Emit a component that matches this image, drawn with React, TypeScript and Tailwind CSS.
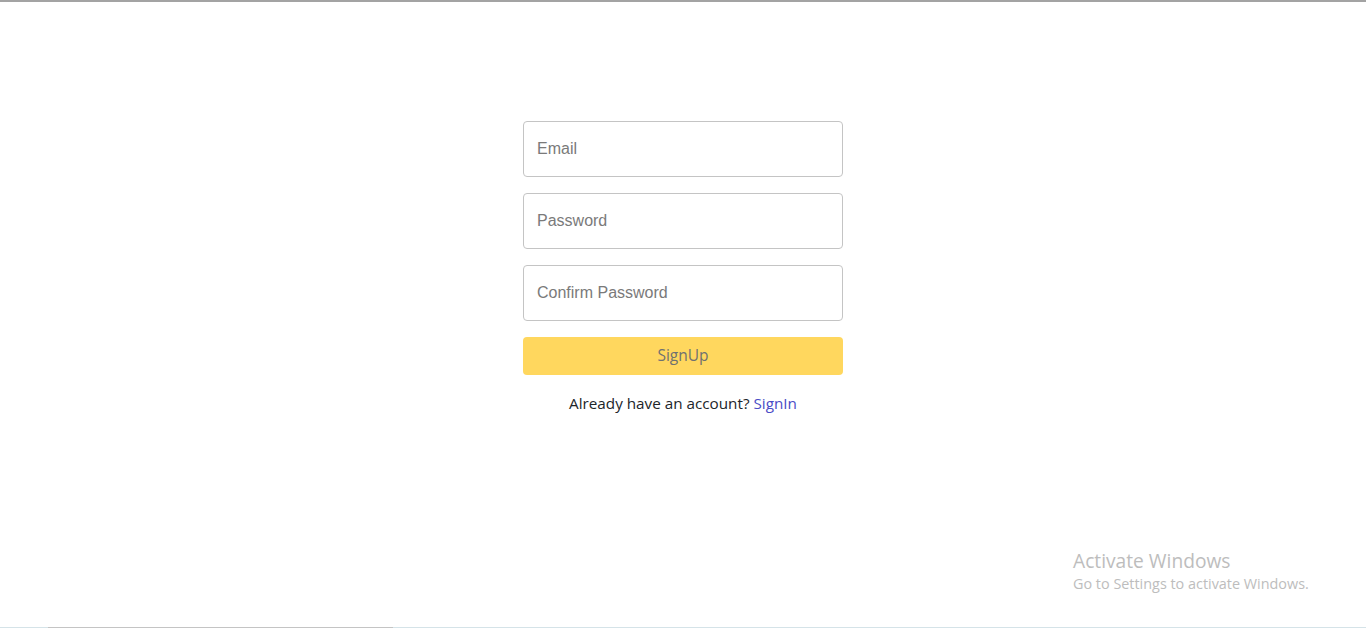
import React from "react";

export default function App() {
  return (
    <div className="relative w-full h-[628px] bg-white overflow-hidden" style={{ fontFamily: '"Liberation Sans", Arial, sans-serif' }}>
      <div className="h-[2px] bg-[#a3a3a3]" />
      <div className="flex justify-center pt-[119px]">
        <form className="w-[320px] flex flex-col" onSubmit={(e) => e.preventDefault()}>
          <input
            type="email"
            placeholder="Email"
            className="h-[56px] w-full rounded-[4px] border border-[#c4c4c4] px-[13px] text-[16px] text-[#212121] placeholder:text-[#7a7a7a] outline-none"
            style={{ fontFamily: '"Liberation Sans", Arial, sans-serif' }}
          />
          <input
            type="password"
            placeholder="Password"
            className="mt-[16px] h-[56px] w-full rounded-[4px] border border-[#c4c4c4] px-[13px] text-[16px] text-[#212121] placeholder:text-[#7a7a7a] outline-none"
            style={{ fontFamily: '"Liberation Sans", Arial, sans-serif' }}
          />
          <input
            type="password"
            placeholder="Confirm Password"
            className="mt-[16px] h-[56px] w-full rounded-[4px] border border-[#c4c4c4] px-[13px] text-[16px] text-[#212121] placeholder:text-[#7a7a7a] outline-none"
            style={{ fontFamily: '"Liberation Sans", Arial, sans-serif' }}
          />
          <button
            type="submit"
            disabled
            className="mt-[16px] h-[38px] w-full rounded-[4px] bg-[#ffd75e] text-[15.5px] text-[#6f7171]"
            style={{ fontFamily: '"Open Sans", "Noto Sans", sans-serif' }}
          >
            SignUp
          </button>
          <p className="mt-[16px] text-center text-[15.25px] leading-[24px] text-[#212529]" style={{ fontFamily: '"Open Sans", "Noto Sans", sans-serif' }}>
            Already have an account? <a href="#" className="text-[#4a4cc6]">SignIn</a>
          </p>
        </form>
      </div>
      <div className="absolute left-[1073px] top-[549px] text-[#bdbdbd]" style={{ fontFamily: '"Open Sans", "Noto Sans", sans-serif' }}>
        <div className="text-[19.2px] leading-[24px]">Activate Windows</div>
        <div className="text-[14.4px] leading-[22px]">Go to Settings to activate Windows.</div>
      </div>
      <div className="absolute left-0 right-0 bottom-0 h-[1px] bg-[#d5e3e8]" />
      <div className="absolute left-[48px] w-[345px] bottom-0 h-[1px] bg-[#c4c4c4]" />
    </div>
  );
}
